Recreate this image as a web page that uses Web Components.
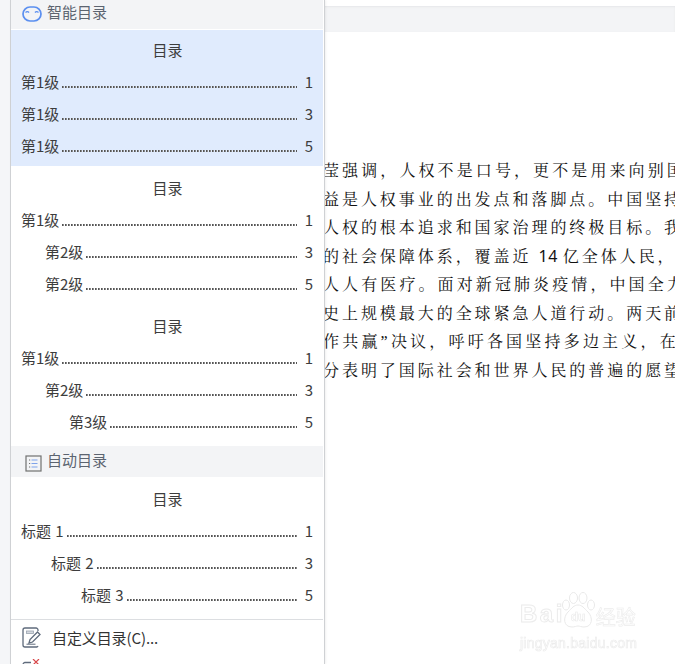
<!DOCTYPE html>
<html lang="zh">
<head>
<meta charset="utf-8">
<style>
  html, body { margin: 0; height: 664px; overflow: hidden; background: #fff; }
  body { font-family: "Noto Sans CJK SC", "Liberation Sans", sans-serif; color: #3d3d3d; }
</style>
</head>
<body>
<doc-page>
  <p style="letter-spacing:3.1px">莹强调，人权不是口号，更不是用来向别国</p>
  <p>益是人权事业的出发点和落脚点。中国坚持</p>
  <p>人权的根本追求和国家治理的终极目标。我</p>
  <p>的社会保障体系，覆盖近 <span style="font-family:'Noto Sans',sans-serif;letter-spacing:.5px;margin-right:-2px">14</span> 亿全体人民，</p>
  <p style="letter-spacing:3.1px">人人有医疗。面对新冠肺炎疫情，中国全力</p>
  <p>史上规模最大的全球紧急人道行动。两天前</p>
  <p style="letter-spacing:3.2px">作共赢<span style="font-family:'Liberation Serif',serif">”</span>决议，呼吁各国坚持多边主义，在</p>
  <p>分表明了国际社会和世界人民的普遍的愿望</p>
</doc-page>

<toc-menu>
  <toc-header label="智能目录" icon="face"></toc-header>
  <toc-preview selected>
    <toc-row title-row label="目录"></toc-row>
    <toc-row label="第1级" page="1"></toc-row>
    <toc-row label="第1级" page="3"></toc-row>
    <toc-row label="第1级" page="5"></toc-row>
  </toc-preview>
  <toc-preview>
    <toc-row title-row label="目录"></toc-row>
    <toc-row label="第1级" page="1"></toc-row>
    <toc-row label="第2级" page="3" indent="24"></toc-row>
    <toc-row label="第2级" page="5" indent="24"></toc-row>
  </toc-preview>
  <toc-preview>
    <toc-row title-row label="目录"></toc-row>
    <toc-row label="第1级" page="1"></toc-row>
    <toc-row label="第2级" page="3" indent="24"></toc-row>
    <toc-row label="第3级" page="5" indent="48"></toc-row>
  </toc-preview>
  <toc-header label="自动目录" icon="list" style="margin-top:4px"></toc-header>
  <toc-preview last>
    <toc-row title-row label="目录"></toc-row>
    <toc-row label="标题 1" page="1"></toc-row>
    <toc-row label="标题 2" page="3" indent="30"></toc-row>
    <toc-row label="标题 3" page="5" indent="60"></toc-row>
  </toc-preview>
  <toc-action label="自定义目录(C)..." icon="edit"></toc-action>
  <toc-action icon="delete"></toc-action>
</toc-menu>

<jy-watermark></jy-watermark>

<script>
const ICONS = {
  face: `<svg width="20" height="16" viewBox="0 0 20 16" fill="none" stroke="#5b8ff0">
      <rect x="1" y="1" width="18" height="14" rx="7" stroke-width="1.700"/>
      <path d="M3.500 6.500q1.800-1.800 3.600 0M12.900 6.500q1.800-1.800 3.600 0" stroke-width="1.200"/>
    </svg>`,
  list: `<svg width="17" height="17" viewBox="0 0 17 17" fill="none">
      <rect x="1" y="1" width="15" height="15" stroke="#707070" stroke-width="1.200"/>
      <path d="M4 5h1.200M4 8.500h1.200M4 12h1.200" stroke="#707070"/>
      <path d="M6.500 5h6M6.500 8.500h6M6.500 12h6" stroke="#7ea3ea"/>
    </svg>`,
  edit: `<svg width="20" height="21" viewBox="0 0 20 21" fill="none">
      <path d="M16 4V3a2 2 0 0 0-2-2H3a2 2 0 0 0-2 2v15a2 2 0 0 0 2 2h12a2 2 0 0 0 1-1" stroke="#5f6b7c" stroke-width="1.300"/>
      <rect x="4.500" y="4" width="7" height="2.500" fill="#d5d9e0" stroke="#9aa3b0" stroke-width=".8"/>
      <path d="M7 16l1-3.500 7.500-7.500 2.500 2.500-7.500 7.500z" stroke="#5f6b7c" stroke-width="1.300"/>
      <path d="M4.500 17.200h9" stroke="#5f6b7c"/>
    </svg>`,
  delete: `<svg width="20" height="21" viewBox="0 0 20 21" fill="none">
      <path d="M9 3.500H3a2 2 0 0 0-2 2v13" stroke="#5f6b7c" stroke-width="1.300"/>
      <path d="M11 0l6 6M17 0l-6 6" stroke="#d8474a" stroke-width="1.200"/>
    </svg>`
};

function makeShadow(el, html) {
  el.attachShadow({ mode: "open" }).innerHTML = html;
}

class DocPage extends HTMLElement {
  connectedCallback() {
    makeShadow(this, `
      <style>
        :host { display: block; }
        .ruler { height: 26px; margin-top: 6px; background: #f3f4f6; box-shadow: inset 0 1px 2px #e6e7e9; }
        .text { padding: 124px 0 0 323px; white-space: nowrap; overflow: hidden;
          font: 16px/28.5px "Noto Serif CJK SC", "Noto Sans CJK SC", serif; letter-spacing: 2.95px; color: #111; }
        ::slotted(p) { margin: 0; height: 28.5px; }
      </style>
      <div class="ruler"></div>
      <div class="text"><slot></slot></div>`);
  }
}

class TocMenu extends HTMLElement {
  connectedCallback() {
    makeShadow(this, `
      <style>
        :host { display: block; position: absolute; left: 0; top: 0; width: 10px; height: 664px; background: #f5f6f8; }
        .panel { position: absolute; left: 10px; top: 0; width: 313px; height: 664px; overflow: hidden;
          background: #fff; border: solid #cfd1d4; border-width: 0 1px; box-shadow: 1px 0 2px rgba(0,0,0,.06); }
      </style>
      <div class="panel"><slot></slot></div>`);
  }
}

class TocHeader extends HTMLElement {
  connectedCallback() {
    const first = this.getAttribute("icon") === "face";
    makeShadow(this, `
      <style>
        :host { display: flex; align-items: center; gap: 5px; box-sizing: border-box; height: ${first ? 29 : 31}px;
          padding: 0 0 ${first ? 7 : 5}px ${first ? 11 : 14}px; background: #f3f4f6;
          color: #5c6470; font-size: 15px; margin-right: 1px; }
        .icon { display: flex; margin-top: ${first ? 6 : 8}px; }
      </style>
      <span class="icon">${ICONS[this.getAttribute("icon")]}</span><span>${this.getAttribute("label")}</span>`);
  }
}

class TocPreview extends HTMLElement {
  connectedCallback() {
    const selected = this.hasAttribute("selected");
    const last = this.hasAttribute("last");
    makeShadow(this, `
      <style>
        :host { display: block; margin-right: 1px; padding: ${selected ? 4 : 6}px 0 ${last ? 8 : 4}px;
          ${selected ? "margin-top: 1px; background: #e0ebfd;" : ""}
          ${last ? "border-bottom: 1px solid #dcdee1;" : ""} }
      </style>
      <slot></slot>`);
  }
}

class TocRow extends HTMLElement {
  connectedCallback() {
    const label = this.getAttribute("label");
    if (this.hasAttribute("title-row")) {
      makeShadow(this, `
        <style>:host { display: block; height: 32px; line-height: 31px; text-align: center; font-size: 15px; padding-left: 1px; }</style>
        ${label}`);
      return;
    }
    const indent = Number(this.getAttribute("indent") || 0);
    makeShadow(this, `
      <style>
        :host { display: flex; align-items: center; box-sizing: border-box; height: 32px; padding: 0 10px 2px ${10 + indent}px;
          font-size: 15px; word-spacing: 1px; }
        .dots { flex: 1; min-width: 0; height: 2px; margin: 0 0 0 3px; align-self: flex-start; margin-top: 20px;
          background: repeating-linear-gradient(90deg, #555 0 1px, #8a8a8a 1px 2px, transparent 2px 3px); }
        .page { width: 16px; text-align: right; }
      </style>
      <span>${label}</span><span class="dots"></span><span class="page">${this.getAttribute("page")}</span>`);
  }
}

class TocAction extends HTMLElement {
  connectedCallback() {
    const label = this.getAttribute("label");
    makeShadow(this, `
      <style>
        :host { display: flex; align-items: ${label ? "center" : "flex-start"}; box-sizing: border-box; height: 37px;
          padding-bottom: ${label ? 2 : 0}px; font-size: 15px; color: #333; }
        .icon { width: 41px; padding: ${label ? 0 : 2}px 0 0 11px; box-sizing: border-box; display: flex; }
        .label { letter-spacing: -.1px; }
      </style>
      <span class="icon">${ICONS[this.getAttribute("icon")]}</span>${label ? `<span class="label">${label}</span>` : ""}`);
  }
}

class JyWatermark extends HTMLElement {
  connectedCallback() {
    makeShadow(this, `
      <style>
        :host { display: block; position: absolute; left: 520px; top: 592px; width: 120px; height: 58px; pointer-events: none; filter: blur(.4px); }
        .logo { display: flex; align-items: flex-end; height: 36px; color: #fff; -webkit-text-stroke: 1px #ececec; }
        .bai { font: bold 24px/24px "Liberation Sans", sans-serif; letter-spacing: 2.500px; position: relative; top: -2px; }
        .paw { width: 36px; height: 36px; margin-left: -5px; flex: none; }
        .cn { font: 20px/20px "Noto Sans CJK SC", sans-serif; white-space: nowrap; position: relative; top: -1px; -webkit-text-stroke: .6px #ececec; }
        .url { font: 14px/14px "Liberation Sans", sans-serif; letter-spacing: .25px; margin-top: 8px; white-space: nowrap; color: #fff; -webkit-text-stroke: .7px #ececec; }
      </style>
      <div class="logo"><span class="bai">Bai</span>
        <svg class="paw" viewBox="0 0 36 36" fill="none" stroke="#e9e9e9" stroke-width="1">
          <ellipse cx="6" cy="13" rx="3.500" ry="5"/>
          <ellipse cx="13.500" cy="6" rx="4" ry="5.500"/>
          <ellipse cx="23" cy="6" rx="4" ry="5.500"/>
          <ellipse cx="31" cy="13" rx="3.500" ry="5"/>
          <path d="M18 13c4 0 6 3 10 7 5 5 5 15-4 15-3 0-4-1-6-1s-3 1-6 1c-9 0-9-10-4-15 4-4 6-7 10-7z"/>
          <text x="18" y="29" text-anchor="middle" font-size="12" font-family="Liberation Sans" font-weight="bold" fill="#fff" stroke="#e9e9e9" stroke-width=".6">du</text>
        </svg>
        <span class="cn">经验</span></div>
      <div class="url">jingyan.baidu.com</div>`);
  }
}

customElements.define("doc-page", DocPage);
customElements.define("toc-menu", TocMenu);
customElements.define("toc-header", TocHeader);
customElements.define("toc-preview", TocPreview);
customElements.define("toc-row", TocRow);
customElements.define("toc-action", TocAction);
customElements.define("jy-watermark", JyWatermark);
</script>
</body>
</html>
